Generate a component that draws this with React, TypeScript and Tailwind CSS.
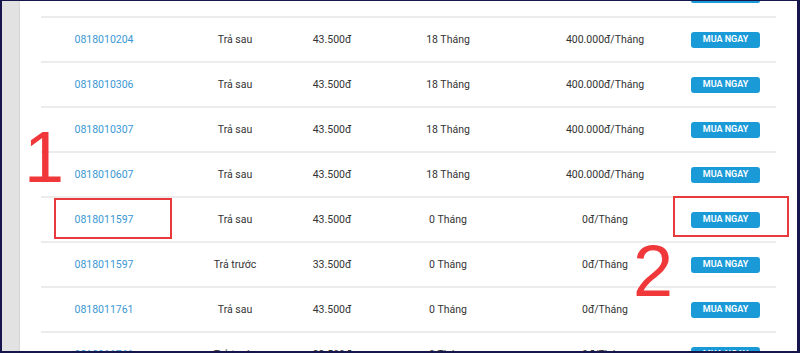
import React from "react";

type Row = {
  phone: string;
  kind: string;
  price: string;
  term: string;
  monthly: string;
};

const rows: Row[] = [
  { phone: "0818010204", kind: "Trả sau", price: "43.500đ", term: "18 Tháng", monthly: "400.000đ/Tháng" },
  { phone: "0818010306", kind: "Trả sau", price: "43.500đ", term: "18 Tháng", monthly: "400.000đ/Tháng" },
  { phone: "0818010307", kind: "Trả sau", price: "43.500đ", term: "18 Tháng", monthly: "400.000đ/Tháng" },
  { phone: "0818010607", kind: "Trả sau", price: "43.500đ", term: "18 Tháng", monthly: "400.000đ/Tháng" },
  { phone: "0818011597", kind: "Trả sau", price: "43.500đ", term: "0 Tháng", monthly: "0đ/Tháng" },
  { phone: "0818011597", kind: "Trả trước", price: "33.500đ", term: "0 Tháng", monthly: "0đ/Tháng" },
  { phone: "0818011761", kind: "Trả sau", price: "43.500đ", term: "0 Tháng", monthly: "0đ/Tháng" },
  { phone: "0818011761", kind: "Trả trước", price: "33.500đ", term: "0 Tháng", monthly: "0đ/Tháng" },
];

const cols = "grid grid-cols-[126px_136px_58px_174px_140px_101px] items-center";

function BuyButton() {
  return (
    <button className="w-[69px] h-[16px] shrink-0 rounded-[3px] bg-[#1b9ad8] text-white text-[9px] font-semibold leading-none">
      MUA NGAY
    </button>
  );
}

function NumberRow({ row }: { row: Row }) {
  return (
    <div className={`${cols} h-[45px] border-t-2 border-[#ececec] text-[10.5px] text-[#333]`}>
      <div className="text-center text-[#3a97d4]">{row.phone}</div>
      <div className="text-center">{row.kind}</div>
      <div className="text-center whitespace-nowrap">{row.price}</div>
      <div className="text-center">{row.term}</div>
      <div className="text-center whitespace-nowrap">{row.monthly}</div>
      <div className="flex justify-center">
        <BuyButton />
      </div>
    </div>
  );
}

export default function App() {
  return (
    <div
      className="relative w-[800px] h-[353px] overflow-hidden flex bg-white border-[#16164c] border-t border-l-2 border-r-[3px] border-b-2"
      style={{ fontFamily: "Roboto, 'Liberation Sans', sans-serif" }}
    >
      {/* Side strip */}
      <div className="w-[18px] shrink-0 bg-[#e2e2e2] border-r border-[#d6d6d6]" />

      {/* Product list (scrolled: only the bottom of the previous row's button shows) */}
      <div className="flex-1 pl-[21px]">
        <div className="w-[735px]">
          <div className="grid grid-cols-[126px_136px_58px_174px_140px_101px] items-start h-[15px]">
            <div className="col-start-6 flex justify-center">
              <div className="w-[69px] h-[2px] rounded-b-[3px] bg-[#1b9ad8]" />
            </div>
          </div>
          {rows.map((row, i) => (
            <NumberRow key={i} row={row} />
          ))}
        </div>
      </div>

      {/* Annotations */}
      <div
        className="absolute left-[22px] top-[120px] text-[72px] leading-none text-[#f0373a]"
        style={{ fontFamily: "'Liberation Sans', sans-serif" }}
      >
        1
      </div>
      <div
        className="absolute left-[631px] top-[234px] text-[72px] leading-none text-[#f0373a]"
        style={{ fontFamily: "'Liberation Sans', sans-serif" }}
      >
        2
      </div>
      <div className="absolute left-[52px] top-[197px] w-[118px] h-[41px] border-2 border-[#e8393c]" />
      <div className="absolute left-[671px] top-[195px] w-[116px] h-[41px] border-2 border-[#e8393c]" />
    </div>
  );
}
